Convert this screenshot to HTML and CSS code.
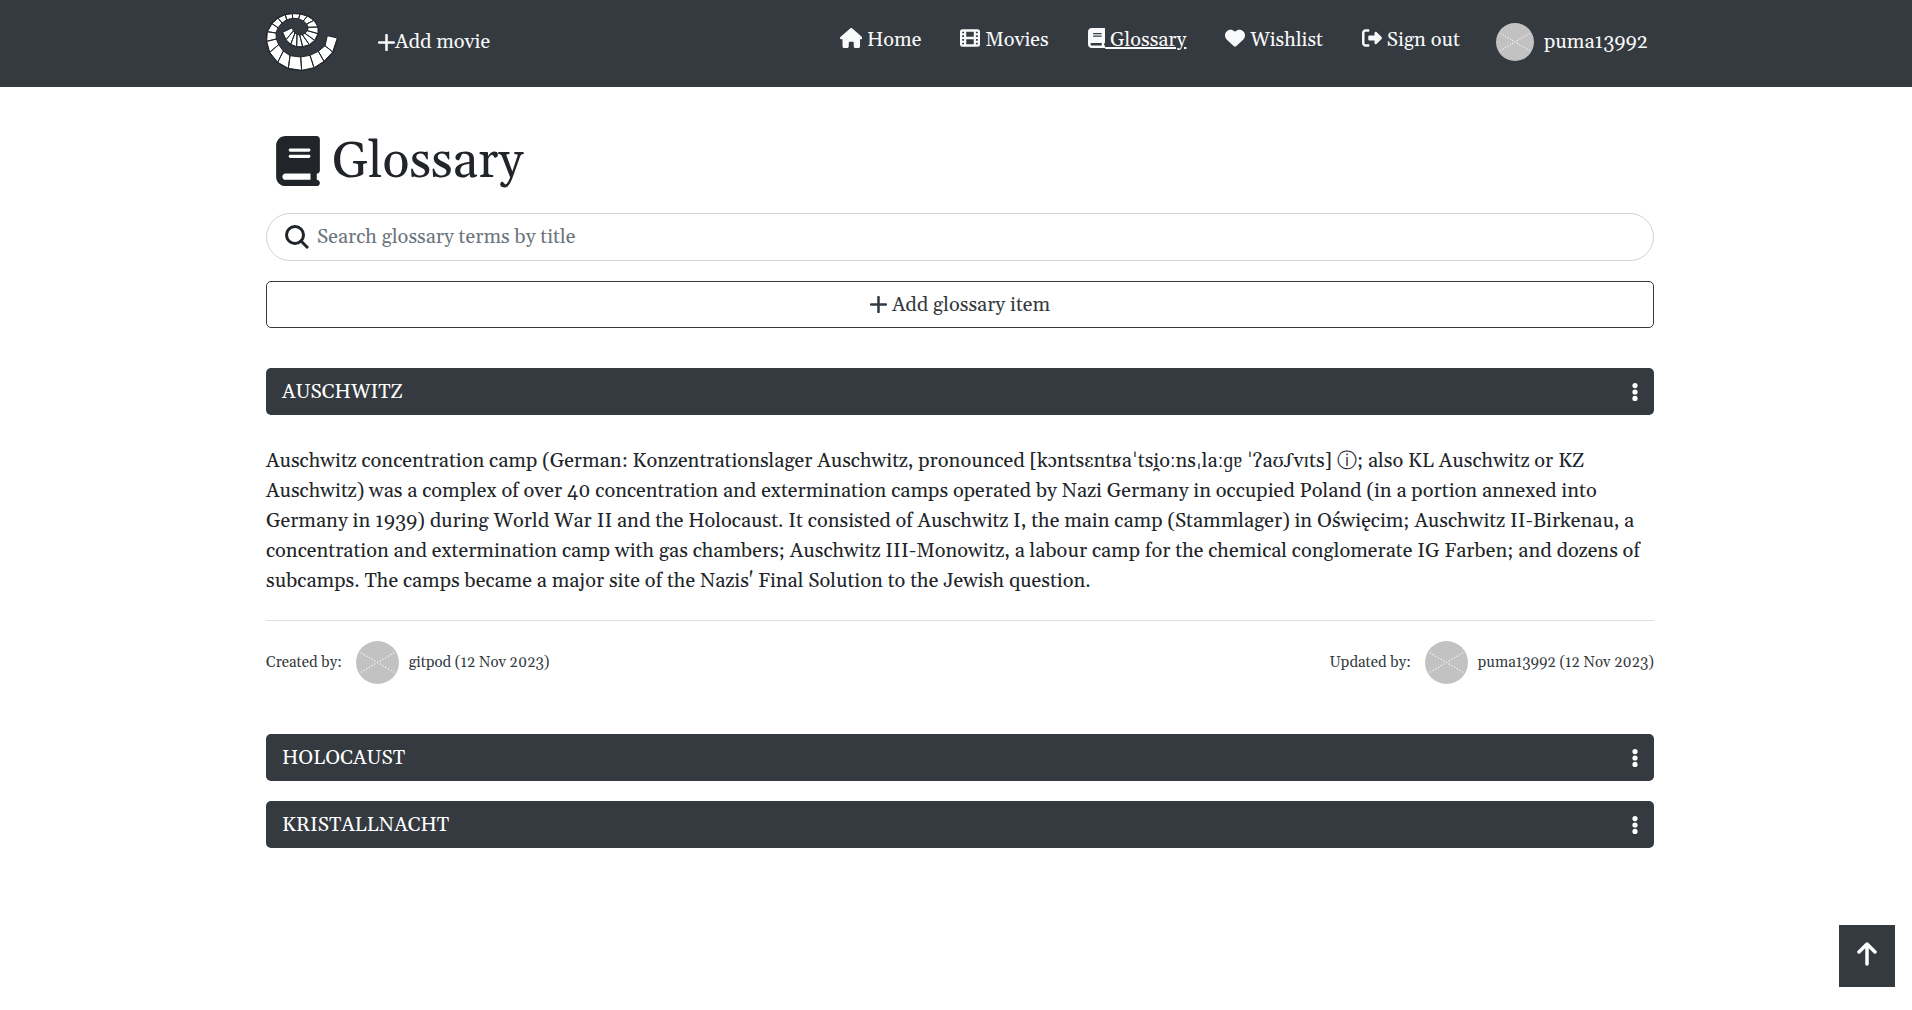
FILE: index.html
```html
<!DOCTYPE html>
<html lang="en">
<head>
<meta charset="utf-8">
<meta name="viewport" content="width=device-width, initial-scale=1">
<title>Glossary</title>
<link rel="stylesheet" href="styles.css">
</head>
<body>
<svg class="sprite" aria-hidden="true">
  <symbol id="book" viewBox="0 0 448 512"><path d="M96 0C43 0 0 43 0 96V416c0 53 43 96 96 96H384h32c17.7 0 32-14.3 32-32s-14.3-32-32-32V384c17.7 0 32-14.3 32-32V32c0-17.7-14.3-32-32-32H384 96zm0 384H352v64H96c-17.7 0-32-14.3-32-32s14.3-32 32-32zm32-240c0-8.8 7.2-16 16-16H336c8.8 0 16 7.2 16 16s-7.2 16-16 16H144c-8.8 0-16-7.2-16-16zm16 48H336c8.8 0 16 7.2 16 16s-7.2 16-16 16H144c-8.8 0-16-7.2-16-16s7.2-16 16-16z"/></symbol>
  <symbol id="plus" viewBox="0 0 16 16"><path d="M8 1v14M1 8h14" fill="none" stroke="currentColor" stroke-width="2.4" stroke-linecap="round"/></symbol>
  <symbol id="dots" viewBox="0 0 6 18"><circle cx="3" cy="2.6" r="2.6"/><circle cx="3" cy="9" r="2.6"/><circle cx="3" cy="15.4" r="2.6"/></symbol>
  <symbol id="avatar" viewBox="0 0 44 44"><circle cx="22" cy="22" r="22" fill="#c2c2c2"/><path d="M5 12L39 32M5 32L39 12" fill="none" stroke="#fff" stroke-width="1.2" stroke-dasharray="1.2 2"/></symbol>
</svg>

<header class="navbar">
  <div class="container navbar-inner">
    <a class="logo" href="#" aria-label="Home page">
      <svg viewBox="48 40 216 174" width="72" height="58">
        <path fill="none" stroke="#15171a" stroke-width="6" stroke-dasharray="3 3" d="M262 115L248 157L222 185L192 204L155 212L115 206L83 188L59 158L50 125L52 96L66 72L84 55L106 45L127 42L150 43L172 49L192 62L204 82L204 102L194 122L178 135L158 141L140 141L122 134L108 120L98 98"/>
        <path fill="#fff" stroke="#22252a" stroke-width="3" d="M262 115L248 157L225 138L232 108ZM248 157L222 185L205 155L225 138ZM222 185L192 204L180 167L205 155ZM192 204L155 212L152 172L180 167ZM155 212L115 206L120 168L152 172ZM115 206L83 188L100 154L120 168ZM83 188L59 158L86 135L100 154ZM59 158L50 125L79 118L86 135ZM50 125L52 96L78 100L79 118ZM52 96L66 72L84 84L78 100ZM66 72L84 55L96 70L84 84ZM84 55L106 45L110 60L96 70ZM106 45L127 42L128 56L110 60ZM127 42L150 43L146 57L128 56ZM150 43L172 49L160 64L146 57ZM172 49L192 62L170 73L160 64ZM192 62L204 82L175 83L170 73ZM204 82L204 102L172 93L175 83ZM204 102L194 122L165 101L172 93ZM194 122L178 135L157 105L165 101ZM178 135L158 141L149 106L157 105ZM158 141L140 141L141 104L149 106ZM140 141L122 134L135 100L141 104ZM122 134L108 120L130 94L135 100ZM108 120L98 98L127 84L130 94Z"/>
      </svg>
    </a>
    <a class="add-movie" href="#"><svg class="icon-plus"><use href="#plus"/></svg>Add movie</a>
    <nav class="links">
      <a href="#"><svg class="icon" viewBox="0 0 576 512"><path d="M575.8 255.5c0 18-15 32.1-32 32.1h-32l.7 160.2c0 2.7-.2 5.4-.5 8.1V472c0 22.1-17.9 40-40 40H456c-1.1 0-2.2 0-3.3-.1c-1.4 .1-2.8 .1-4.2 .1H416 392c-22.1 0-40-17.9-40-40V448 384c0-17.7-14.3-32-32-32H256c-17.7 0-32 14.3-32 32v64 24c0 22.1-17.9 40-40 40H160 128.1c-1.5 0-3-.1-4.5-.2c-1.2 .1-2.4 .2-3.6 .2H104c-22.1 0-40-17.9-40-40V360c0-.9 0-1.9 .1-2.8V287.6H32c-18 0-32-14-32-32.1c0-9 3-17 10-24L266.4 8c7-7 15-8 22-8s15 2 21 7L564.8 231.5c8 7 12 15 11 24z"/></svg> Home</a>
      <a href="#"><svg class="icon" viewBox="0 0 512 512"><path fill-rule="evenodd" d="M64 32H448a64 64 0 0 1 64 64V416a64 64 0 0 1-64 64H64a64 64 0 0 1-64-64V96A64 64 0 0 1 64 32zM160 96V224H352V96zM160 288V416H352V288zM56 96V136H104V96zM56 188V228H104V188zM56 284V324H104V284zM56 376V416H104V376zM408 96V136H456V96zM408 188V228H456V188zM408 284V324H456V284zM408 376V416H456V376z"/></svg> Movies</a>
      <a class="active" href="#" aria-current="page"><svg class="icon" viewBox="0 0 448 512"><use href="#book"/></svg> Glossary</a>
      <a href="#"><svg class="icon" viewBox="0 0 512 512"><path d="M47.6 300.4L228.3 469.1c7.5 7 17.4 10.9 27.7 10.9s20.2-3.9 27.7-10.9L464.4 300.4c30.4-28.3 47.6-68 47.6-109.5v-5.8c0-69.9-50.5-129.5-119.4-141C347 36.5 300.6 51.4 268 84L256 96 244 84c-32.6-32.6-79-47.5-124.6-39.9C50.5 55.6 0 115.2 0 185.1v5.8c0 41.5 17.2 81.2 47.6 109.5z"/></svg> Wishlist</a>
      <a href="#"><svg class="icon" viewBox="0 0 512 512"><path d="M377.9 105.9L500.7 228.7c7.2 7.2 11.3 17.1 11.3 27.3s-4.1 20.1-11.3 27.3L377.9 406.1c-6.4 6.4-15 9.9-24 9.9c-18.7 0-33.9-15.2-33.9-33.9l0-62.1-128 0c-17.7 0-32-14.3-32-32l0-64c0-17.7 14.3-32 32-32l128 0 0-62.1c0-18.7 15.2-33.9 33.9-33.9c9 0 17.6 3.6 24 9.9zM160 96L96 96c-17.7 0-32 14.3-32 32l0 256c0 17.7 14.3 32 32 32l64 0c17.7 0 32 14.3 32 32s-14.3 32-32 32l-64 0c-53 0-96-43-96-96L0 128C0 75 43 32 96 32l64 0c17.7 0 32 14.3 32 32s-14.3 32-32 32z"/></svg> Sign out</a>
    </nav>
    <a class="profile" href="#"><svg class="avatar-small"><use href="#avatar"/></svg>puma13992</a>
  </div>
</header>

<main class="container">
  <h1><svg class="title-icon"><use href="#book"/></svg><span>Glossary</span></h1>

  <form class="search" role="search">
    <label for="q"><svg class="search-icon" viewBox="0 0 24 24" role="img" aria-label="Search glossary"><circle cx="10" cy="10" r="8.5" fill="none" stroke="currentColor" stroke-width="3"/><path d="M15 15l8 8" stroke="currentColor" stroke-width="3"/></svg></label>
    <input id="q" type="search" placeholder="Search glossary terms by title">
  </form>

  <button class="add-item" type="button"><svg class="icon-plus"><use href="#plus"/></svg>Add glossary item</button>

  <section class="terms">
    <article>
      <div class="term-bar"><button class="term-name" type="button" aria-expanded="true">AUSCHWITZ</button><button class="term-menu" type="button" aria-label="Options"><svg><use href="#dots"/></svg></button></div>
      <div class="term-body">
        <p>Auschwitz concentration camp (German: Konzentrationslager Auschwitz, pronounced [kɔntsɛntʁaˈtsi̯oːnsˌlaːɡɐ ˈʔaʊʃvɪts] ⓘ; also KL Auschwitz or KZ Auschwitz) was a complex of over 40 concentration and extermination camps operated by Nazi Germany in occupied Poland (in a portion annexed into Germany in 1939) during World War II and the Holocaust. It consisted of Auschwitz I, the main camp (Stammlager) in Oświęcim; Auschwitz II-Birkenau, a concentration and extermination camp with gas chambers; Auschwitz III-Monowitz, a labour camp for the chemical conglomerate IG Farben; and dozens of subcamps. The camps became a major site of the Nazis' Final Solution to the Jewish question.</p>
        <footer>
          <div class="credit"><span>Created by:</span><a href="#"><svg class="avatar"><use href="#avatar"/></svg>gitpod (12 Nov 2023)</a></div>
          <div class="credit"><span>Updated by:</span><a href="#"><svg class="avatar"><use href="#avatar"/></svg>puma13992 (12 Nov 2023)</a></div>
        </footer>
      </div>
    </article>
    <article>
      <div class="term-bar"><button class="term-name" type="button" aria-expanded="false">HOLOCAUST</button><button class="term-menu" type="button" aria-label="Options"><svg><use href="#dots"/></svg></button></div>
    </article>
    <article>
      <div class="term-bar"><button class="term-name" type="button" aria-expanded="false">KRISTALLNACHT</button><button class="term-menu" type="button" aria-label="Options"><svg><use href="#dots"/></svg></button></div>
    </article>
  </section>
</main>

<button class="to-top" type="button" aria-label="Back to top"><svg viewBox="0 0 20 24"><path d="M10 22V2M2 10l8-8 8 8" fill="none" stroke="currentColor" stroke-width="3.5" stroke-linecap="round" stroke-linejoin="round"/></svg></button>
</body>
</html>
```
FILE: styles.css
```css
* { box-sizing: border-box; }

body {
  margin: 0;
  background: #fff;
  color: #212529;
  font: 20px/30px Georgia, Gelasio, "Liberation Serif", serif;
}

a { color: inherit; text-decoration: none; }
button, input { font: inherit; color: inherit; }
button { cursor: pointer; }
svg { flex: none; fill: currentColor; }

.sprite { position: absolute; width: 0; height: 0; }

.container {
  max-width: 1396px;
  margin: 0 auto;
  padding-left: 8px;
}

.navbar { background: #343a40; color: #f8f9fa; }
.navbar-inner { display: flex; align-items: center; height: 87px; padding-bottom: 3px; }
.logo { display: flex; margin-right: 40px; }
.add-movie { display: flex; align-items: center; }
.icon-plus { width: 17px; height: 17px; }

.links { display: flex; gap: 39px; margin: 0 36px 5px auto; }
.icon { height: 20px; vertical-align: -2px; }
.active { text-decoration: underline; text-decoration-thickness: 2px; }
.profile { display: flex; align-items: center; gap: 10px; padding-right: 6px; }
.avatar-small { width: 38px; height: 38px; }

h1 {
  display: flex;
  align-items: center;
  gap: 12px;
  margin: 41px 0 19px;
  padding-left: 10px;
  font-size: 50px;
  line-height: 62px;
  font-weight: 400;
}
h1 span { padding-top: 4px; }
.title-icon { width: 44px; height: 50px; }

.search {
  display: flex;
  align-items: center;
  gap: 8px;
  height: 48px;
  padding: 0 18px;
  border: 1px solid #ced4da;
  border-radius: 24px;
}
.search label { display: flex; }
.search-icon { width: 24px; height: 24px; }
.search input { flex: 1; padding: 0; border: 0; background: none; outline: 0; }
.search input::placeholder { color: #6c757d; opacity: 1; }

.add-item {
  display: flex;
  justify-content: center;
  align-items: center;
  gap: 5px;
  width: 100%;
  height: 47px;
  margin: 20px 0 40px;
  border: 1px solid #343a40;
  border-radius: 5px;
  background: #fff;
  color: #343a40;
}

.terms { display: flex; flex-direction: column; gap: 20px; }
.term-bar {
  display: flex;
  align-items: center;
  height: 47px;
  border-radius: 5px;
  background: #343a40;
  color: #fff;
}
.term-name {
  flex: 1;
  padding: 0 16px;
  border: 0;
  background: none;
  text-align: left;
}
.term-menu { display: flex; padding: 10px 16px; border: 0; background: none; }
.term-menu svg { width: 6px; height: 18px; }

.term-body { padding: 31px 0 30px; }
.term-body p { margin: 0; }
.term-body footer {
  display: flex;
  justify-content: space-between;
  margin-top: 24px;
  padding-top: 20px;
  border-top: 1px solid #dedfdf;
  font-size: 15px;
  color: #343a40;
}
.credit, .credit a { display: flex; align-items: center; }
.credit { gap: 14px; }
.credit a { gap: 10px; }
.avatar { width: 43px; height: 43px; }

.to-top {
  position: fixed;
  right: 17px;
  bottom: 23px;
  display: grid;
  place-items: center;
  width: 56px;
  height: 62px;
  padding: 0 0 4px;
  border: 0;
  background: #343a40;
  color: #fff;
}
.to-top svg { width: 20px; height: 24px; }
```
